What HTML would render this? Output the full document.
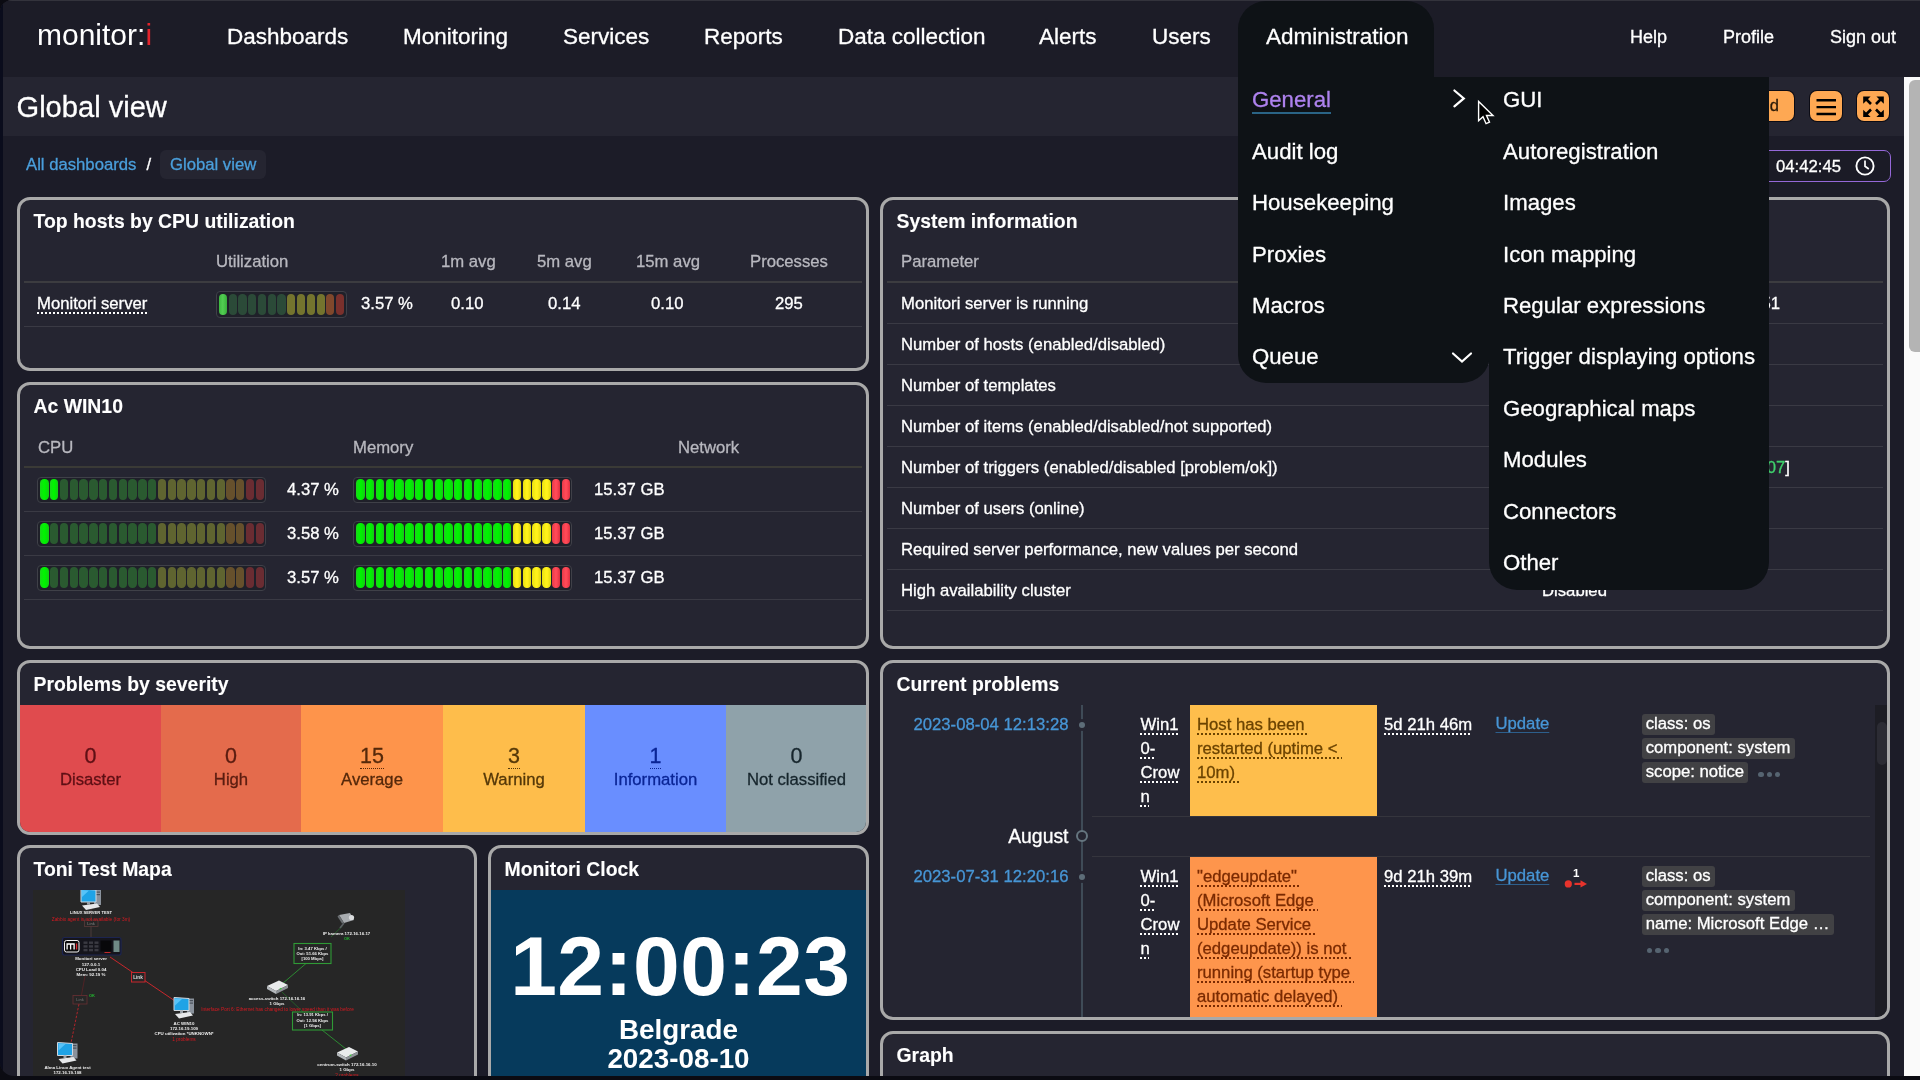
<!DOCTYPE html>
<html>
<head>
<meta charset="utf-8">
<title>Global view</title>
<style>
*{box-sizing:border-box;margin:0;padding:0}
html,body{width:1920px;height:1080px;overflow:hidden;background:#0b0b12}
body{-webkit-text-stroke:.3px;font-family:"Liberation Sans",sans-serif;color:#fff;position:relative}
#screen{will-change:transform;position:absolute;left:0;top:0;width:1920px;height:1075.5px;background:#1c1c28;overflow:hidden;border-radius:12px 0 0 14px}
#edgeL{position:absolute;left:0;top:0;width:2.5px;height:1076px;background:#0a0c1c;z-index:50}
#edgeT{position:absolute;left:0;top:0;width:1920px;height:1.3px;background:#33333c;z-index:50}
.abs{position:absolute}
/* NAV */
#nav{position:absolute;left:0;top:0;width:1920px;height:77px;background:#1c1c27}
#logo{-webkit-text-stroke:0;position:absolute;left:37px;top:17px;font-size:30px;line-height:36px;color:#fff;letter-spacing:0px}
#logo b{font-weight:normal;color:#e2242c}
.nv{position:absolute;top:22.5px;font-size:22.5px;line-height:28px;color:#fff;white-space:nowrap}
.nv2{position:absolute;top:25px;font-size:18px;line-height:24px;color:#fff;white-space:nowrap}
#admtab{position:absolute;left:1238px;top:1px;width:196px;height:81px;background:#0e1216;border-radius:28px 28px 0 0}
/* HEADER */
#hdr{position:absolute;left:0;top:77px;width:1904px;height:59px;background:#252531}
#title{position:absolute;left:16.5px;top:89.5px;font-size:29.1px;line-height:34px;color:#fff}
/* breadcrumbs */
.bc{position:absolute;top:155px;font-size:16.7px;line-height:20px;white-space:nowrap}
/* widgets */
.w{position:absolute;border:3px solid #a9a9a9;border-radius:13px;background:#252531;overflow:hidden}
.wt{-webkit-text-stroke:.1px;position:absolute;left:13.5px;top:8.7px;font-size:19.4px;line-height:24px;font-weight:bold;color:#fff;white-space:nowrap}
.t{position:absolute;white-space:nowrap;font-size:16.7px;line-height:20px;color:#fff}
.th{position:absolute;white-space:nowrap;font-size:16.7px;line-height:20px;color:#b8b8bf}
.hl{position:absolute;height:1px;background:#3a3a44}
.hl2{position:absolute;height:2px;background:#3c3c40}
.barbox{position:absolute;border:1.5px solid #3f4048;border-radius:4px;background:#1f2029}
.sg{position:absolute;display:block;border-radius:4.2px}
.dot{text-decoration:underline dotted;text-underline-offset:3px;text-decoration-thickness:1.5px}
.sev{position:absolute;top:42px;height:130px;text-align:center}
.sn{position:absolute;left:0;right:0;top:38.6px;font-size:21.5px;line-height:24px}
.sn .du{display:inline-block;height:25.7px;border-bottom:1.6px dotted currentColor}
.sl{position:absolute;left:0;right:0;top:64.5px;font-size:16.7px;line-height:20px}
.tag{position:absolute;height:20.5px;padding:0 4.2px;background:#414144;border-radius:3px;font-size:16.7px;line-height:20px;color:#fff;white-space:nowrap}
.hbtn{position:absolute;top:90.7px;height:30.3px;background:#fea853;border-radius:7px;box-shadow:0 0 0 1px #0b0b14}
/* menus */
#dd1{position:absolute;left:1238px;top:77px;width:252px;height:306px;background:#0e1216;border-radius:0 0 28px 28px;z-index:20}
#dd2{position:absolute;left:1489px;top:77px;width:280px;height:513px;background:#0e1216;border-radius:0 0 28px 28px;z-index:21}
.mi{position:absolute;font-size:22.2px;line-height:28px;color:#fff;white-space:nowrap}
/* scrollbar */
#sb{position:absolute;left:1904px;top:77px;width:16px;height:999px;background:#fafafa;z-index:30}
#sbt{position:absolute;left:1909px;top:80px;width:11px;height:272px;background:#b4b4b4;border-radius:6px 0 0 6px;z-index:31}
</style>
</head>
<body>
<div id="screen">
<!-- NAV -->
<div id="nav">
  <div id="admtab"></div>
  <div id="logo">monitor:<b>i</b></div>
  <div class="nv" style="left:227px">Dashboards</div>
  <div class="nv" style="left:403px">Monitoring</div>
  <div class="nv" style="left:563px">Services</div>
  <div class="nv" style="left:704px">Reports</div>
  <div class="nv" style="left:838px">Data collection</div>
  <div class="nv" style="left:1039px">Alerts</div>
  <div class="nv" style="left:1152px">Users</div>
  <div class="nv" style="left:1266px">Administration</div>
  <div class="nv2" style="left:1630px">Help</div>
  <div class="nv2" style="left:1723px">Profile</div>
  <div class="nv2" style="left:1830px">Sign out</div>
</div>
<!-- HEADER -->
<div id="hdr"></div>
<div id="title">Global view</div>
<div class="hbtn" style="left:1700px;width:94px"><span style="position:absolute;right:15px;top:4.5px;font-size:16.5px;line-height:20px;color:#2a1a08">d</span></div>
<div class="hbtn" style="left:1810.2px;width:31.6px"><svg width="33" height="33" viewBox="0 0 33 33" style="position:absolute;left:-0.7px;top:-1px"><path d="M6.5 10.2H26M6.5 17.1H26M6.5 24H26" stroke="#000" stroke-width="2.4" fill="none"/></svg></div>
<div class="hbtn" style="left:1857.3px;width:31.7px"><svg width="33" height="33" viewBox="0 0 33 33" style="position:absolute;left:-0.8px;top:-1px"><g stroke="#000" stroke-width="2.6" fill="none"><path d="M8.5 8.5L14 14M24.5 8.5L19 14M8.5 25L14 19.5M24.5 25L19 19.5"/></g><g fill="#000"><path d="M6.2 6.4H13.6L6.2 13.8Z"/><path d="M26.8 6.4H19.4L26.8 13.8Z"/><path d="M6.2 27.1H13.6L6.2 19.7Z"/><path d="M26.8 27.1H19.4L26.8 19.7Z"/></g></svg></div>

<!-- BREADCRUMBS -->
<div class="abs" style="left:160px;top:150px;width:106px;height:29px;background:#252531;border-radius:6px"></div>
<div class="bc" style="left:26px;color:#4a9fdc">All dashboards</div>
<div class="bc" style="left:146.5px;color:#fff">/</div>
<div class="bc" style="left:170px;color:#4a9fdc">Global view</div>
<div class="abs" style="left:1500px;top:150px;width:391px;height:32px;border:1.7px solid #9568d8;border-radius:7px;background:#1b1b26"></div>
<div class="t" style="left:1776px;top:156.5px">04:42:45</div>
<svg class="abs" style="left:1853px;top:154px" width="24" height="24" viewBox="0 0 24 24"><circle cx="12" cy="12" r="8.6" stroke="#fff" stroke-width="1.9" fill="none"/><path d="M12 6.6V12.3L15.8 15" stroke="#fff" stroke-width="1.7" fill="none"/></svg>


<!-- W1 Top hosts -->
<div class="w" id="w1" style="left:17px;top:197px;width:852px;height:174px">
  <div class="wt">Top hosts by CPU utilization</div>
<div class="th" style="left:196px;top:52px">Utilization</div><div class="th" style="left:421px;top:52px">1m avg</div><div class="th" style="left:517px;top:52px">5m avg</div><div class="th" style="left:616px;top:52px">15m avg</div><div class="th" style="left:730px;top:52px">Processes</div><div class="hl2" style="left:4px;top:81px;width:838px;height:1.5px"></div><div class="t dot" style="left:17px;top:94px">Monitori server</div><div class="barbox" style="left:196px;top:91px;width:131px;height:27px"></div><i class="sg" style="left:198.80px;top:94px;width:8.2px;height:21px;background:linear-gradient(90deg,#3db840,#52cc52 45%,#4cc74c 60%,#38ae3c)"></i><i class="sg" style="left:208.57px;top:94px;width:8.2px;height:21px;background:#2b4a38"></i><i class="sg" style="left:218.34px;top:94px;width:8.2px;height:21px;background:#2b4a38"></i><i class="sg" style="left:228.11px;top:94px;width:8.2px;height:21px;background:#2b4a38"></i><i class="sg" style="left:237.88px;top:94px;width:8.2px;height:21px;background:#2b4a38"></i><i class="sg" style="left:247.65px;top:94px;width:8.2px;height:21px;background:#2b4a38"></i><i class="sg" style="left:257.42px;top:94px;width:8.2px;height:21px;background:#2b4a38"></i><i class="sg" style="left:267.19px;top:94px;width:8.2px;height:21px;background:#74742e"></i><i class="sg" style="left:276.96px;top:94px;width:8.2px;height:21px;background:#74742e"></i><i class="sg" style="left:286.73px;top:94px;width:8.2px;height:21px;background:#74742e"></i><i class="sg" style="left:296.50px;top:94px;width:8.2px;height:21px;background:#74742e"></i><i class="sg" style="left:306.27px;top:94px;width:8.2px;height:21px;background:#80482c"></i><i class="sg" style="left:316.04px;top:94px;width:8.2px;height:21px;background:#7a302c"></i>
<div class="t" style="left:341px;top:94px">3.57 %</div><div class="t" style="left:431px;top:94px">0.10</div><div class="t" style="left:528px;top:94px">0.14</div><div class="t" style="left:631px;top:94px">0.10</div><div class="t" style="left:755px;top:94px">295</div><div class="hl" style="left:4px;top:126px;width:838px"></div>
</div>
<!-- W2 Ac WIN10 -->
<div class="w" id="w2" style="left:17px;top:382px;width:852px;height:267px">
  <div class="wt">Ac WIN10</div>
<div class="th" style="left:18px;top:53px">CPU</div><div class="th" style="left:333px;top:53px">Memory</div><div class="th" style="left:658px;top:53px">Network</div><div class="hl2" style="left:4px;top:81px;width:838px;height:1.5px;background:#3a3a36"></div><div class="barbox" style="left:17px;top:91.5px;width:229px;height:26.5px"></div><i class="sg" style="left:20.30px;top:94.3px;width:8.4px;height:21px;background:linear-gradient(90deg,#18d818,#00f400 45%,#00f000 60%,#14cc14)"></i><i class="sg" style="left:30.09px;top:94.3px;width:8.4px;height:21px;background:linear-gradient(90deg,#18d818,#00f400 45%,#00f000 60%,#14cc14)"></i><i class="sg" style="left:39.88px;top:94.3px;width:8.4px;height:21px;background:#2a5a30"></i><i class="sg" style="left:49.67px;top:94.3px;width:8.4px;height:21px;background:#2a5a30"></i><i class="sg" style="left:59.46px;top:94.3px;width:8.4px;height:21px;background:#2a5a30"></i><i class="sg" style="left:69.25px;top:94.3px;width:8.4px;height:21px;background:#2a5a30"></i><i class="sg" style="left:79.04px;top:94.3px;width:8.4px;height:21px;background:#2a5a30"></i><i class="sg" style="left:88.83px;top:94.3px;width:8.4px;height:21px;background:#2a5a30"></i><i class="sg" style="left:98.62px;top:94.3px;width:8.4px;height:21px;background:#2a5a30"></i><i class="sg" style="left:108.41px;top:94.3px;width:8.4px;height:21px;background:#2a5a30"></i><i class="sg" style="left:118.20px;top:94.3px;width:8.4px;height:21px;background:#2a5a30"></i><i class="sg" style="left:127.99px;top:94.3px;width:8.4px;height:21px;background:#2a5a30"></i><i class="sg" style="left:137.78px;top:94.3px;width:8.4px;height:21px;background:#5f6430"></i><i class="sg" style="left:147.57px;top:94.3px;width:8.4px;height:21px;background:#5f6430"></i><i class="sg" style="left:157.36px;top:94.3px;width:8.4px;height:21px;background:#5f6430"></i><i class="sg" style="left:167.15px;top:94.3px;width:8.4px;height:21px;background:#5f6430"></i><i class="sg" style="left:176.94px;top:94.3px;width:8.4px;height:21px;background:#5f6430"></i><i class="sg" style="left:186.73px;top:94.3px;width:8.4px;height:21px;background:#5f6430"></i><i class="sg" style="left:196.52px;top:94.3px;width:8.4px;height:21px;background:#5f6430"></i><i class="sg" style="left:206.31px;top:94.3px;width:8.4px;height:21px;background:#66502c"></i><i class="sg" style="left:216.10px;top:94.3px;width:8.4px;height:21px;background:#66502c"></i><i class="sg" style="left:225.89px;top:94.3px;width:8.4px;height:21px;background:#6a2c32"></i><i class="sg" style="left:235.68px;top:94.3px;width:8.4px;height:21px;background:#6a2c32"></i>
<div class="t" style="left:267px;top:95px">4.37 %</div><div class="barbox" style="left:333px;top:91.5px;width:219px;height:26.5px"></div><i class="sg" style="left:336.20px;top:94.3px;width:8.4px;height:21px;background:linear-gradient(90deg,#18d818,#00f400 45%,#00f000 60%,#14cc14)"></i><i class="sg" style="left:345.99px;top:94.3px;width:8.4px;height:21px;background:linear-gradient(90deg,#18d818,#00f400 45%,#00f000 60%,#14cc14)"></i><i class="sg" style="left:355.78px;top:94.3px;width:8.4px;height:21px;background:linear-gradient(90deg,#18d818,#00f400 45%,#00f000 60%,#14cc14)"></i><i class="sg" style="left:365.57px;top:94.3px;width:8.4px;height:21px;background:linear-gradient(90deg,#18d818,#00f400 45%,#00f000 60%,#14cc14)"></i><i class="sg" style="left:375.36px;top:94.3px;width:8.4px;height:21px;background:linear-gradient(90deg,#18d818,#00f400 45%,#00f000 60%,#14cc14)"></i><i class="sg" style="left:385.15px;top:94.3px;width:8.4px;height:21px;background:linear-gradient(90deg,#18d818,#00f400 45%,#00f000 60%,#14cc14)"></i><i class="sg" style="left:394.94px;top:94.3px;width:8.4px;height:21px;background:linear-gradient(90deg,#18d818,#00f400 45%,#00f000 60%,#14cc14)"></i><i class="sg" style="left:404.73px;top:94.3px;width:8.4px;height:21px;background:linear-gradient(90deg,#18d818,#00f400 45%,#00f000 60%,#14cc14)"></i><i class="sg" style="left:414.52px;top:94.3px;width:8.4px;height:21px;background:linear-gradient(90deg,#18d818,#00f400 45%,#00f000 60%,#14cc14)"></i><i class="sg" style="left:424.31px;top:94.3px;width:8.4px;height:21px;background:linear-gradient(90deg,#18d818,#00f400 45%,#00f000 60%,#14cc14)"></i><i class="sg" style="left:434.10px;top:94.3px;width:8.4px;height:21px;background:linear-gradient(90deg,#18d818,#00f400 45%,#00f000 60%,#14cc14)"></i><i class="sg" style="left:443.89px;top:94.3px;width:8.4px;height:21px;background:linear-gradient(90deg,#18d818,#00f400 45%,#00f000 60%,#14cc14)"></i><i class="sg" style="left:453.68px;top:94.3px;width:8.4px;height:21px;background:linear-gradient(90deg,#18d818,#00f400 45%,#00f000 60%,#14cc14)"></i><i class="sg" style="left:463.47px;top:94.3px;width:8.4px;height:21px;background:linear-gradient(90deg,#18d818,#00f400 45%,#00f000 60%,#14cc14)"></i><i class="sg" style="left:473.26px;top:94.3px;width:8.4px;height:21px;background:linear-gradient(90deg,#18d818,#00f400 45%,#00f000 60%,#14cc14)"></i><i class="sg" style="left:483.05px;top:94.3px;width:8.4px;height:21px;background:linear-gradient(90deg,#18d818,#00f400 45%,#00f000 60%,#14cc14)"></i><i class="sg" style="left:492.84px;top:94.3px;width:8.4px;height:21px;background:linear-gradient(90deg,#e8e010,#fff31a 45%,#fff01a 60%,#e0d810)"></i><i class="sg" style="left:502.63px;top:94.3px;width:8.4px;height:21px;background:linear-gradient(90deg,#e8e010,#fff31a 45%,#fff01a 60%,#e0d810)"></i><i class="sg" style="left:512.42px;top:94.3px;width:8.4px;height:21px;background:linear-gradient(90deg,#e8e010,#fff31a 45%,#fff01a 60%,#e0d810)"></i><i class="sg" style="left:522.21px;top:94.3px;width:8.4px;height:21px;background:linear-gradient(90deg,#e8e010,#fff31a 45%,#fff01a 60%,#e0d810)"></i><i class="sg" style="left:532.00px;top:94.3px;width:8.4px;height:21px;background:linear-gradient(90deg,#ea3a48,#ff4a58 45%,#ff4755 60%,#e03040)"></i><i class="sg" style="left:541.79px;top:94.3px;width:8.4px;height:21px;background:linear-gradient(90deg,#ea3a48,#ff4a58 45%,#ff4755 60%,#e03040)"></i>
<div class="t" style="left:574px;top:95px">15.37 GB</div><div class="hl" style="left:4px;top:126px;width:838px"></div><div class="barbox" style="left:17px;top:135.5px;width:229px;height:26.5px"></div><i class="sg" style="left:20.30px;top:138.3px;width:8.4px;height:21px;background:linear-gradient(90deg,#18d818,#00f400 45%,#00f000 60%,#14cc14)"></i><i class="sg" style="left:30.09px;top:138.3px;width:8.4px;height:21px;background:#2a5a30"></i><i class="sg" style="left:39.88px;top:138.3px;width:8.4px;height:21px;background:#2a5a30"></i><i class="sg" style="left:49.67px;top:138.3px;width:8.4px;height:21px;background:#2a5a30"></i><i class="sg" style="left:59.46px;top:138.3px;width:8.4px;height:21px;background:#2a5a30"></i><i class="sg" style="left:69.25px;top:138.3px;width:8.4px;height:21px;background:#2a5a30"></i><i class="sg" style="left:79.04px;top:138.3px;width:8.4px;height:21px;background:#2a5a30"></i><i class="sg" style="left:88.83px;top:138.3px;width:8.4px;height:21px;background:#2a5a30"></i><i class="sg" style="left:98.62px;top:138.3px;width:8.4px;height:21px;background:#2a5a30"></i><i class="sg" style="left:108.41px;top:138.3px;width:8.4px;height:21px;background:#2a5a30"></i><i class="sg" style="left:118.20px;top:138.3px;width:8.4px;height:21px;background:#2a5a30"></i><i class="sg" style="left:127.99px;top:138.3px;width:8.4px;height:21px;background:#2a5a30"></i><i class="sg" style="left:137.78px;top:138.3px;width:8.4px;height:21px;background:#5f6430"></i><i class="sg" style="left:147.57px;top:138.3px;width:8.4px;height:21px;background:#5f6430"></i><i class="sg" style="left:157.36px;top:138.3px;width:8.4px;height:21px;background:#5f6430"></i><i class="sg" style="left:167.15px;top:138.3px;width:8.4px;height:21px;background:#5f6430"></i><i class="sg" style="left:176.94px;top:138.3px;width:8.4px;height:21px;background:#5f6430"></i><i class="sg" style="left:186.73px;top:138.3px;width:8.4px;height:21px;background:#5f6430"></i><i class="sg" style="left:196.52px;top:138.3px;width:8.4px;height:21px;background:#5f6430"></i><i class="sg" style="left:206.31px;top:138.3px;width:8.4px;height:21px;background:#66502c"></i><i class="sg" style="left:216.10px;top:138.3px;width:8.4px;height:21px;background:#66502c"></i><i class="sg" style="left:225.89px;top:138.3px;width:8.4px;height:21px;background:#6a2c32"></i><i class="sg" style="left:235.68px;top:138.3px;width:8.4px;height:21px;background:#6a2c32"></i>
<div class="t" style="left:267px;top:139px">3.58 %</div><div class="barbox" style="left:333px;top:135.5px;width:219px;height:26.5px"></div><i class="sg" style="left:336.20px;top:138.3px;width:8.4px;height:21px;background:linear-gradient(90deg,#18d818,#00f400 45%,#00f000 60%,#14cc14)"></i><i class="sg" style="left:345.99px;top:138.3px;width:8.4px;height:21px;background:linear-gradient(90deg,#18d818,#00f400 45%,#00f000 60%,#14cc14)"></i><i class="sg" style="left:355.78px;top:138.3px;width:8.4px;height:21px;background:linear-gradient(90deg,#18d818,#00f400 45%,#00f000 60%,#14cc14)"></i><i class="sg" style="left:365.57px;top:138.3px;width:8.4px;height:21px;background:linear-gradient(90deg,#18d818,#00f400 45%,#00f000 60%,#14cc14)"></i><i class="sg" style="left:375.36px;top:138.3px;width:8.4px;height:21px;background:linear-gradient(90deg,#18d818,#00f400 45%,#00f000 60%,#14cc14)"></i><i class="sg" style="left:385.15px;top:138.3px;width:8.4px;height:21px;background:linear-gradient(90deg,#18d818,#00f400 45%,#00f000 60%,#14cc14)"></i><i class="sg" style="left:394.94px;top:138.3px;width:8.4px;height:21px;background:linear-gradient(90deg,#18d818,#00f400 45%,#00f000 60%,#14cc14)"></i><i class="sg" style="left:404.73px;top:138.3px;width:8.4px;height:21px;background:linear-gradient(90deg,#18d818,#00f400 45%,#00f000 60%,#14cc14)"></i><i class="sg" style="left:414.52px;top:138.3px;width:8.4px;height:21px;background:linear-gradient(90deg,#18d818,#00f400 45%,#00f000 60%,#14cc14)"></i><i class="sg" style="left:424.31px;top:138.3px;width:8.4px;height:21px;background:linear-gradient(90deg,#18d818,#00f400 45%,#00f000 60%,#14cc14)"></i><i class="sg" style="left:434.10px;top:138.3px;width:8.4px;height:21px;background:linear-gradient(90deg,#18d818,#00f400 45%,#00f000 60%,#14cc14)"></i><i class="sg" style="left:443.89px;top:138.3px;width:8.4px;height:21px;background:linear-gradient(90deg,#18d818,#00f400 45%,#00f000 60%,#14cc14)"></i><i class="sg" style="left:453.68px;top:138.3px;width:8.4px;height:21px;background:linear-gradient(90deg,#18d818,#00f400 45%,#00f000 60%,#14cc14)"></i><i class="sg" style="left:463.47px;top:138.3px;width:8.4px;height:21px;background:linear-gradient(90deg,#18d818,#00f400 45%,#00f000 60%,#14cc14)"></i><i class="sg" style="left:473.26px;top:138.3px;width:8.4px;height:21px;background:linear-gradient(90deg,#18d818,#00f400 45%,#00f000 60%,#14cc14)"></i><i class="sg" style="left:483.05px;top:138.3px;width:8.4px;height:21px;background:linear-gradient(90deg,#18d818,#00f400 45%,#00f000 60%,#14cc14)"></i><i class="sg" style="left:492.84px;top:138.3px;width:8.4px;height:21px;background:linear-gradient(90deg,#e8e010,#fff31a 45%,#fff01a 60%,#e0d810)"></i><i class="sg" style="left:502.63px;top:138.3px;width:8.4px;height:21px;background:linear-gradient(90deg,#e8e010,#fff31a 45%,#fff01a 60%,#e0d810)"></i><i class="sg" style="left:512.42px;top:138.3px;width:8.4px;height:21px;background:linear-gradient(90deg,#e8e010,#fff31a 45%,#fff01a 60%,#e0d810)"></i><i class="sg" style="left:522.21px;top:138.3px;width:8.4px;height:21px;background:linear-gradient(90deg,#e8e010,#fff31a 45%,#fff01a 60%,#e0d810)"></i><i class="sg" style="left:532.00px;top:138.3px;width:8.4px;height:21px;background:linear-gradient(90deg,#ea3a48,#ff4a58 45%,#ff4755 60%,#e03040)"></i><i class="sg" style="left:541.79px;top:138.3px;width:8.4px;height:21px;background:linear-gradient(90deg,#ea3a48,#ff4a58 45%,#ff4755 60%,#e03040)"></i>
<div class="t" style="left:574px;top:139px">15.37 GB</div><div class="hl" style="left:4px;top:170px;width:838px"></div><div class="barbox" style="left:17px;top:179.5px;width:229px;height:26.5px"></div><i class="sg" style="left:20.30px;top:182.3px;width:8.4px;height:21px;background:linear-gradient(90deg,#18d818,#00f400 45%,#00f000 60%,#14cc14)"></i><i class="sg" style="left:30.09px;top:182.3px;width:8.4px;height:21px;background:#2a5a30"></i><i class="sg" style="left:39.88px;top:182.3px;width:8.4px;height:21px;background:#2a5a30"></i><i class="sg" style="left:49.67px;top:182.3px;width:8.4px;height:21px;background:#2a5a30"></i><i class="sg" style="left:59.46px;top:182.3px;width:8.4px;height:21px;background:#2a5a30"></i><i class="sg" style="left:69.25px;top:182.3px;width:8.4px;height:21px;background:#2a5a30"></i><i class="sg" style="left:79.04px;top:182.3px;width:8.4px;height:21px;background:#2a5a30"></i><i class="sg" style="left:88.83px;top:182.3px;width:8.4px;height:21px;background:#2a5a30"></i><i class="sg" style="left:98.62px;top:182.3px;width:8.4px;height:21px;background:#2a5a30"></i><i class="sg" style="left:108.41px;top:182.3px;width:8.4px;height:21px;background:#2a5a30"></i><i class="sg" style="left:118.20px;top:182.3px;width:8.4px;height:21px;background:#2a5a30"></i><i class="sg" style="left:127.99px;top:182.3px;width:8.4px;height:21px;background:#2a5a30"></i><i class="sg" style="left:137.78px;top:182.3px;width:8.4px;height:21px;background:#5f6430"></i><i class="sg" style="left:147.57px;top:182.3px;width:8.4px;height:21px;background:#5f6430"></i><i class="sg" style="left:157.36px;top:182.3px;width:8.4px;height:21px;background:#5f6430"></i><i class="sg" style="left:167.15px;top:182.3px;width:8.4px;height:21px;background:#5f6430"></i><i class="sg" style="left:176.94px;top:182.3px;width:8.4px;height:21px;background:#5f6430"></i><i class="sg" style="left:186.73px;top:182.3px;width:8.4px;height:21px;background:#5f6430"></i><i class="sg" style="left:196.52px;top:182.3px;width:8.4px;height:21px;background:#5f6430"></i><i class="sg" style="left:206.31px;top:182.3px;width:8.4px;height:21px;background:#66502c"></i><i class="sg" style="left:216.10px;top:182.3px;width:8.4px;height:21px;background:#66502c"></i><i class="sg" style="left:225.89px;top:182.3px;width:8.4px;height:21px;background:#6a2c32"></i><i class="sg" style="left:235.68px;top:182.3px;width:8.4px;height:21px;background:#6a2c32"></i>
<div class="t" style="left:267px;top:183px">3.57 %</div><div class="barbox" style="left:333px;top:179.5px;width:219px;height:26.5px"></div><i class="sg" style="left:336.20px;top:182.3px;width:8.4px;height:21px;background:linear-gradient(90deg,#18d818,#00f400 45%,#00f000 60%,#14cc14)"></i><i class="sg" style="left:345.99px;top:182.3px;width:8.4px;height:21px;background:linear-gradient(90deg,#18d818,#00f400 45%,#00f000 60%,#14cc14)"></i><i class="sg" style="left:355.78px;top:182.3px;width:8.4px;height:21px;background:linear-gradient(90deg,#18d818,#00f400 45%,#00f000 60%,#14cc14)"></i><i class="sg" style="left:365.57px;top:182.3px;width:8.4px;height:21px;background:linear-gradient(90deg,#18d818,#00f400 45%,#00f000 60%,#14cc14)"></i><i class="sg" style="left:375.36px;top:182.3px;width:8.4px;height:21px;background:linear-gradient(90deg,#18d818,#00f400 45%,#00f000 60%,#14cc14)"></i><i class="sg" style="left:385.15px;top:182.3px;width:8.4px;height:21px;background:linear-gradient(90deg,#18d818,#00f400 45%,#00f000 60%,#14cc14)"></i><i class="sg" style="left:394.94px;top:182.3px;width:8.4px;height:21px;background:linear-gradient(90deg,#18d818,#00f400 45%,#00f000 60%,#14cc14)"></i><i class="sg" style="left:404.73px;top:182.3px;width:8.4px;height:21px;background:linear-gradient(90deg,#18d818,#00f400 45%,#00f000 60%,#14cc14)"></i><i class="sg" style="left:414.52px;top:182.3px;width:8.4px;height:21px;background:linear-gradient(90deg,#18d818,#00f400 45%,#00f000 60%,#14cc14)"></i><i class="sg" style="left:424.31px;top:182.3px;width:8.4px;height:21px;background:linear-gradient(90deg,#18d818,#00f400 45%,#00f000 60%,#14cc14)"></i><i class="sg" style="left:434.10px;top:182.3px;width:8.4px;height:21px;background:linear-gradient(90deg,#18d818,#00f400 45%,#00f000 60%,#14cc14)"></i><i class="sg" style="left:443.89px;top:182.3px;width:8.4px;height:21px;background:linear-gradient(90deg,#18d818,#00f400 45%,#00f000 60%,#14cc14)"></i><i class="sg" style="left:453.68px;top:182.3px;width:8.4px;height:21px;background:linear-gradient(90deg,#18d818,#00f400 45%,#00f000 60%,#14cc14)"></i><i class="sg" style="left:463.47px;top:182.3px;width:8.4px;height:21px;background:linear-gradient(90deg,#18d818,#00f400 45%,#00f000 60%,#14cc14)"></i><i class="sg" style="left:473.26px;top:182.3px;width:8.4px;height:21px;background:linear-gradient(90deg,#18d818,#00f400 45%,#00f000 60%,#14cc14)"></i><i class="sg" style="left:483.05px;top:182.3px;width:8.4px;height:21px;background:linear-gradient(90deg,#18d818,#00f400 45%,#00f000 60%,#14cc14)"></i><i class="sg" style="left:492.84px;top:182.3px;width:8.4px;height:21px;background:linear-gradient(90deg,#e8e010,#fff31a 45%,#fff01a 60%,#e0d810)"></i><i class="sg" style="left:502.63px;top:182.3px;width:8.4px;height:21px;background:linear-gradient(90deg,#e8e010,#fff31a 45%,#fff01a 60%,#e0d810)"></i><i class="sg" style="left:512.42px;top:182.3px;width:8.4px;height:21px;background:linear-gradient(90deg,#e8e010,#fff31a 45%,#fff01a 60%,#e0d810)"></i><i class="sg" style="left:522.21px;top:182.3px;width:8.4px;height:21px;background:linear-gradient(90deg,#e8e010,#fff31a 45%,#fff01a 60%,#e0d810)"></i><i class="sg" style="left:532.00px;top:182.3px;width:8.4px;height:21px;background:linear-gradient(90deg,#ea3a48,#ff4a58 45%,#ff4755 60%,#e03040)"></i><i class="sg" style="left:541.79px;top:182.3px;width:8.4px;height:21px;background:linear-gradient(90deg,#ea3a48,#ff4a58 45%,#ff4755 60%,#e03040)"></i>
<div class="t" style="left:574px;top:183px">15.37 GB</div><div class="hl" style="left:4px;top:214px;width:838px"></div>
</div>
<!-- W3 Problems by severity -->
<div class="w" id="w3" style="left:17px;top:660px;width:852px;height:175px">
  <div class="wt">Problems by severity</div>
<div class="sev" style="left:0px;width:141px;background:#e04b4e;color:#5e0f14"><div class="sn"><span>0</span></div><div class="sl">Disaster</div></div><div class="sev" style="left:141px;width:140px;background:#e46b4c;color:#5a1c10"><div class="sn"><span>0</span></div><div class="sl">High</div></div><div class="sev" style="left:281px;width:142px;background:#fe944b;color:#55280a"><div class="sn"><span class="du">15</span></div><div class="sl">Average</div></div><div class="sev" style="left:423px;width:142px;background:#febd4b;color:#553808"><div class="sn"><span class="du">3</span></div><div class="sl">Warning</div></div><div class="sev" style="left:565px;width:141px;background:#698eff;color:#0a2596"><div class="sn"><span class="du">1</span></div><div class="sl">Information</div></div><div class="sev" style="left:706px;width:141px;background:#8fa2aa;color:#16252c"><div class="sn"><span>0</span></div><div class="sl">Not classified</div></div>
</div>
<!-- W4 Map -->
<div class="w" id="w4" style="left:17px;top:845px;width:460px;height:260px">
  <div class="wt">Toni Test Mapa</div>
<svg class="abs" style="left:13px;top:42px;filter:blur(.45px)" width="372" height="190" viewBox="0 0 372 190" font-family="Liberation Sans, sans-serif"><rect width="372" height="190" fill="#262626"/><path d="M58 17L58 48" stroke="#4a3a3a" stroke-width="1" fill="none"/><path d="M77 67L142 111" stroke="#c8262c" stroke-width="1" fill="none"/><path d="M52 86L48.5 105" stroke="#5a2226" stroke-width="0.8" fill="none"/><path d="M46 114L38 153" stroke="#b0242a" stroke-width="1" stroke-dasharray="2.5 1.5" fill="none"/><path d="M309.5 36L298 47" stroke="#256a2a" stroke-width="0.8" fill="none"/><path d="M273 73.5L249 94" stroke="#2c8a32" stroke-width="1" fill="none"/><path d="M249 102L270 122" stroke="#256a2a" stroke-width="0.8" fill="none"/><path d="M289 140L313 159" stroke="#2c8a32" stroke-width="1" fill="none"/><rect x="51.5" y="30" width="13.5" height="6.5" fill="#262626" stroke="#5a3a3a" stroke-width="0.8"/><text x="58" y="34.812" text-anchor="middle" font-size="4.2" fill="#9a9a9a" opacity="0.8">Link</text><rect x="98.5" y="82.5" width="13.5" height="9.5" fill="#262626" stroke="#c8262c" stroke-width="1"/><text x="105" y="88.956" text-anchor="middle" font-size="4.6" fill="#e8e8e8" opacity="0.95" font-weight="bold">Link</text><rect x="40" y="105.5" width="14" height="8.5" fill="#262626" stroke="#6a3034" stroke-width="0.8"/><text x="47" y="111.312" text-anchor="middle" font-size="4.2" fill="#8a8a8a" opacity="0.8">Link</text><text x="59" y="107.44" text-anchor="middle" font-size="4" fill="#22c030" opacity="0.9" font-weight="bold">OK</text><rect x="29.5" y="47.5" width="58.5" height="17.5" rx="2" fill="#15151c" stroke="#1c2450" stroke-width="1.2"/><rect x="31.5" y="50.5" width="14.5" height="11.5" rx="2" fill="#0c0c0c" stroke="#f2f2f2" stroke-width="1"/><path d="M34.1 59.5v-5.5h3.5v5.5m0-5.5h3.5v5.5" stroke="#fff" stroke-width="1.3" fill="none"/><rect x="42.9" y="53.5" width="1.3" height="6" fill="#e2242c"/><rect x="50.5" y="51.5" width="4" height="2.4" fill="#3a3a42"/><rect x="50.5" y="55.2" width="4" height="2.4" fill="#3a3a42"/><rect x="50.5" y="58.9" width="4" height="2.4" fill="#3a3a42"/><rect x="56" y="51.5" width="4" height="2.4" fill="#3a3a42"/><rect x="56" y="55.2" width="4" height="2.4" fill="#3a3a42"/><rect x="56" y="58.9" width="4" height="2.4" fill="#3a3a42"/><rect x="61.5" y="51.5" width="4" height="2.4" fill="#3a3a42"/><rect x="61.5" y="55.2" width="4" height="2.4" fill="#3a3a42"/><rect x="61.5" y="58.9" width="4" height="2.4" fill="#3a3a42"/><rect x="67.5" y="50.5" width="11" height="11" fill="#08080a"/><rect x="80.5" y="50.5" width="6" height="11.5" fill="#6f8a86"/><rect x="71.5" y="62" width="6" height="1" fill="#c02a2a"/><text x="58" y="70.484" text-anchor="middle" font-size="4.4" fill="#fff" opacity="0.92" font-weight="bold">Monitori server</text><text x="58" y="75.784" text-anchor="middle" font-size="4.4" fill="#fff" opacity="0.92" font-weight="bold">127.0.0.1</text><text x="58" y="81.084" text-anchor="middle" font-size="4.4" fill="#fff" opacity="0.92" font-weight="bold">CPU Load 0.04</text><text x="58" y="86.384" text-anchor="middle" font-size="4.4" fill="#fff" opacity="0.92" font-weight="bold">Mem: 92.19 %</text><g transform="translate(58,9)"><rect x="3" y="-9" width="7" height="15" fill="#8a929c"/><rect x="4" y="-7.5" width="5" height="1.2" fill="#4a525c"/><rect x="4" y="-5" width="5" height="1.2" fill="#4a525c"/><path d="M-10 -10 L5 -9 L5 3 L-10 3 Z" fill="#1fa3e6"/><path d="M-10 -10 L5 -9 L5 3 L-10 3 Z" fill="none" stroke="#cfd8e0" stroke-width="1"/><path d="M-9 -9 L-2 -8.6 L-9 -2 Z" fill="#6fd0ff" opacity=".7"/><rect x="-4" y="3" width="3" height="2.5" fill="#9aa2aa"/><path d="M-9 6.5 L6 4.5 L9 8 L-5 11 Z" fill="#e6e8ea"/></g><text x="58" y="24.476" text-anchor="middle" font-size="4.1" fill="#fff" opacity="0.92" font-weight="bold">LINUX SERVER TEST</text><text x="58" y="30.5172" text-anchor="middle" font-size="4.77" fill="#e01820" opacity="0.95">Zabbix agent is not available (for 3m)</text><g transform="translate(151,117.5)"><rect x="3" y="-9" width="7" height="15" fill="#8a929c"/><rect x="4" y="-7.5" width="5" height="1.2" fill="#4a525c"/><rect x="4" y="-5" width="5" height="1.2" fill="#4a525c"/><path d="M-10 -10 L5 -9 L5 3 L-10 3 Z" fill="#1fa3e6"/><path d="M-10 -10 L5 -9 L5 3 L-10 3 Z" fill="none" stroke="#cfd8e0" stroke-width="1"/><path d="M-9 -9 L-2 -8.6 L-9 -2 Z" fill="#6fd0ff" opacity=".7"/><rect x="-4" y="3" width="3" height="2.5" fill="#9aa2aa"/><path d="M-9 6.5 L6 4.5 L9 8 L-5 11 Z" fill="#e6e8ea"/></g><text x="151" y="134.584" text-anchor="middle" font-size="4.4" fill="#fff" opacity="0.92" font-weight="bold">AC WIN10</text><text x="151" y="139.884" text-anchor="middle" font-size="4.4" fill="#fff" opacity="0.92" font-weight="bold">172.16.19.109</text><text x="151" y="145.184" text-anchor="middle" font-size="4.4" fill="#fff" opacity="0.92" font-weight="bold">CPU utilization *UNKNOWN*</text><text x="151" y="151.01" text-anchor="middle" font-size="4.75" fill="#e01820" opacity="0.95">1 problems</text><text x="244.5" y="120.51" text-anchor="middle" font-size="4.75" fill="#e01820" opacity="0.95">Interface Port 6: Ethernet has changed to lower speed than it was before</text><g transform="translate(34.5,162.5)"><rect x="3" y="-9" width="7" height="15" fill="#8a929c"/><rect x="4" y="-7.5" width="5" height="1.2" fill="#4a525c"/><rect x="4" y="-5" width="5" height="1.2" fill="#4a525c"/><path d="M-10 -10 L5 -9 L5 3 L-10 3 Z" fill="#1fa3e6"/><path d="M-10 -10 L5 -9 L5 3 L-10 3 Z" fill="none" stroke="#cfd8e0" stroke-width="1"/><path d="M-9 -9 L-2 -8.6 L-9 -2 Z" fill="#6fd0ff" opacity=".7"/><rect x="-4" y="3" width="3" height="2.5" fill="#9aa2aa"/><path d="M-9 6.5 L6 4.5 L9 8 L-5 11 Z" fill="#e6e8ea"/></g><text x="34.5" y="178.884" text-anchor="middle" font-size="4.4" fill="#fff" opacity="0.92" font-weight="bold">Alma Linux Agent test</text><text x="34.5" y="184.384" text-anchor="middle" font-size="4.4" fill="#fff" opacity="0.92" font-weight="bold">172.16.19.108</text><g transform="translate(313,29)"><path d="M-7 -4 L4 -6 L8 1 L-2 4 Z" fill="#a8acb0"/><path d="M-7 -4 L-2 4 L-4 4.5 L-8.5 -2.5 Z" fill="#6a6e72"/><circle cx="5.5" cy="-1.5" r="2.6" fill="#dadcde"/><path d="M-2 4 L-6 9" stroke="#5a5e62" stroke-width="1.6"/></g><text x="313.5" y="44.584" text-anchor="middle" font-size="4.4" fill="#fff" opacity="0.92" font-weight="bold">IP kamera 172.16.16.17</text><text x="314" y="49.74" text-anchor="middle" font-size="4" fill="#22c030" opacity="0.9" font-weight="bold">OK</text><rect x="261" y="53.5" width="37" height="20" fill="#262626" stroke="#2f9a36" stroke-width="1.1"/><text x="279.5" y="59.812" text-anchor="middle" font-size="4.2" fill="#fff" opacity="0.92" font-weight="bold">In: 3.47 Kbps /</text><text x="279.5" y="65.112" text-anchor="middle" font-size="4.2" fill="#fff" opacity="0.92" font-weight="bold">Out: 51.66 Kbps</text><text x="279.5" y="70.412" text-anchor="middle" font-size="4.2" fill="#fff" opacity="0.92" font-weight="bold">[100 Mbps]</text><rect x="259.5" y="122" width="40" height="18" fill="#262626" stroke="#2f9a36" stroke-width="1.1"/><text x="279.5" y="126.312" text-anchor="middle" font-size="4.2" fill="#fff" opacity="0.92" font-weight="bold">In: 13.91 Kbps /</text><text x="279.5" y="131.612" text-anchor="middle" font-size="4.2" fill="#fff" opacity="0.92" font-weight="bold">Out: 12.94 Kbps</text><text x="279.5" y="136.912" text-anchor="middle" font-size="4.2" fill="#fff" opacity="0.92" font-weight="bold">[1 Gbps]</text><g transform="translate(244,96)"><path d="M-10 0 L2 -5.5 L11 -1 L-1 5 Z" fill="#e9ebec"/><path d="M-10 0 L-1 5 L-1 8 L-10 3 Z" fill="#b4b8bc"/><path d="M-1 5 L11 -1 L11 2 L-1 8 Z" fill="#8c9196"/><rect x="1" y="3.4" width="2" height="1.2" fill="#38c838" transform="rotate(-27)"/></g><text x="244" y="109.584" text-anchor="middle" font-size="4.4" fill="#fff" opacity="0.92" font-weight="bold">access-switch 172.16.16.16</text><text x="244" y="114.884" text-anchor="middle" font-size="4.4" fill="#fff" opacity="0.92" font-weight="bold">1 Gbps</text><g transform="translate(314,162.5)"><path d="M-10 0 L2 -5.5 L11 -1 L-1 5 Z" fill="#e9ebec"/><path d="M-10 0 L-1 5 L-1 8 L-10 3 Z" fill="#b4b8bc"/><path d="M-1 5 L11 -1 L11 2 L-1 8 Z" fill="#8c9196"/><rect x="1" y="3.4" width="2" height="1.2" fill="#38c838" transform="rotate(-27)"/></g><text x="314" y="175.784" text-anchor="middle" font-size="4.4" fill="#fff" opacity="0.92" font-weight="bold">centrum-switch 172.16.16.10</text><text x="314" y="181.184" text-anchor="middle" font-size="4.4" fill="#fff" opacity="0.92" font-weight="bold">1 Gbps</text><text x="314" y="186.71" text-anchor="middle" font-size="4.75" fill="#e01820" opacity="0.95">2 problems</text></svg>
</div>
<!-- W5 Clock -->
<div class="w" id="w5" style="left:488px;top:845px;width:381px;height:260px">
  <div class="wt">Monitori Clock</div>
<div class="abs" style="left:0;top:42px;width:375px;height:200px;background:#063a5c"></div><div class="abs" style="left:1.5px;width:375px;top:73px;text-align:center;-webkit-text-stroke:0;font-weight:bold;font-size:84px;line-height:90px;color:#fff;white-space:nowrap;letter-spacing:.5px;text-indent:.5px">12:00:23</div><div class="abs" style="left:0;width:375px;top:167px;text-align:center;-webkit-text-stroke:0;font-weight:bold;font-size:27.8px;line-height:30px;color:#fff">Belgrade</div><div class="abs" style="left:0;width:375px;top:196px;text-align:center;-webkit-text-stroke:0;font-weight:bold;font-size:27.8px;line-height:30px;color:#fff">2023-08-10</div>
</div>
<!-- W6 System info -->
<div class="w" id="w6" style="left:880px;top:197px;width:1010px;height:452px">
  <div class="wt">System information</div>
<div class="th" style="left:18px;top:52px">Parameter</div><div class="th" style="left:659px;top:52px">Value</div><div class="th" style="left:817px;top:52px">Details</div><div class="hl2" style="left:4px;top:81px;width:996px"></div><div class="t" style="left:18px;top:94px">Monitori server is running</div><div class="hl" style="left:4px;top:123px;width:996px"></div><div class="t" style="left:18px;top:135px">Number of hosts (enabled/disabled)</div><div class="hl" style="left:4px;top:164px;width:996px"></div><div class="t" style="left:18px;top:176px">Number of templates</div><div class="hl" style="left:4px;top:205px;width:996px"></div><div class="t" style="left:18px;top:217px">Number of items (enabled/disabled/not supported)</div><div class="hl" style="left:4px;top:246px;width:996px"></div><div class="t" style="left:18px;top:258px">Number of triggers (enabled/disabled [problem/ok])</div><div class="hl" style="left:4px;top:287px;width:996px"></div><div class="t" style="left:18px;top:299px">Number of users (online)</div><div class="hl" style="left:4px;top:328px;width:996px"></div><div class="t" style="left:18px;top:340px">Required server performance, new values per second</div><div class="hl" style="left:4px;top:369px;width:996px"></div><div class="t" style="left:18px;top:381px">High availability cluster</div><div class="hl" style="left:4px;top:410px;width:996px"></div><div class="t" style="right:107px;top:94px">localhost:10051</div><div class="t" style="right:97px;top:258px">152 / 0 [<span style="color:#e45959">19</span> / <span style="color:#3fd06c">107</span>]</div><div class="t" style="left:659px;top:381px">Disabled</div>
</div>
<!-- W7 Current problems -->
<div class="w" id="w7" style="left:880px;top:660px;width:1010px;height:360px">
  <div class="wt">Current problems</div>
<div class="abs" style="left:197.9px;top:42px;width:2.6px;height:320px;background:#3f4b57"></div><div class="abs" style="left:193.2px;top:55.5px;width:12px;height:12px;border-radius:6px;background:#252531"></div><div class="abs" style="left:196.2px;top:58.5px;width:6px;height:6px;border-radius:3px;background:#5d6d78"></div><div class="abs" style="left:193.2px;top:207.5px;width:12px;height:12px;border-radius:6px;background:#252531"></div><div class="abs" style="left:196.2px;top:210.5px;width:6px;height:6px;border-radius:3px;background:#5d6d78"></div><div class="abs" style="left:193.2px;top:167px;width:12px;height:12px;border-radius:6px;background:#252531;border:2.2px solid #65757f"></div><div class="t" style="right:818.5px;top:161px;font-size:19.4px;line-height:24px">August</div><div class="abs" style="left:992px;top:42px;width:12px;height:320px;background:#1d1d24"></div><div class="abs" style="left:994px;top:59px;width:10px;height:43px;background:#2c2c34;border-radius:5px"></div><div class="hl" style="left:209px;top:153px;width:778px;background:#35353d"></div><div class="hl" style="left:209px;top:193px;width:778px;background:#35353d"></div><div class="t" style="left:30.5px;top:52px;color:#4796d6">2023-08-04 12:13:28</div><div class="t dot" style="left:257.5px;top:52px">Win1</div><div class="t dot" style="left:257.5px;top:76px">0-</div><div class="t dot" style="left:257.5px;top:100px">Crow</div><div class="t dot" style="left:257.5px;top:124px">n</div><div class="abs" style="left:307px;top:42px;width:187px;height:111px;background:#febe4c"></div><div class="t dot" style="left:314px;top:52px;color:#6b4300">Host has been&nbsp;</div><div class="t dot" style="left:314px;top:76px;color:#6b4300">restarted (uptime &lt;&nbsp;</div><div class="t dot" style="left:314px;top:100px;color:#6b4300">10m)&nbsp;</div><div class="t dot" style="left:501px;top:52px">5d 21h 46m</div><div class="t" style="left:612.5px;top:51.2px;color:#4796d6;text-decoration:underline;text-decoration-color:#2d5f8c;text-decoration-thickness:1.2px;text-underline-offset:3px">Update</div><div class="tag" style="left:758.5px;top:51px">class: os</div><div class="tag" style="left:758.5px;top:75px">component: system</div><div class="tag" style="left:758.5px;top:99px">scope: notice</div><div class="abs" style="left:875.3px;top:109.1px;width:5.4px;height:5.4px;border-radius:3px;background:#566471"></div><div class="abs" style="left:883.6px;top:109.1px;width:5.4px;height:5.4px;border-radius:3px;background:#566471"></div><div class="abs" style="left:891.9px;top:109.1px;width:5.4px;height:5.4px;border-radius:3px;background:#566471"></div><div class="t" style="left:30.5px;top:204px;color:#4796d6">2023-07-31 12:20:16</div><div class="t dot" style="left:257.5px;top:204px">Win1</div><div class="t dot" style="left:257.5px;top:228px">0-</div><div class="t dot" style="left:257.5px;top:252px">Crow</div><div class="t dot" style="left:257.5px;top:276px">n</div><div class="abs" style="left:307px;top:194px;width:187px;height:165px;background:#fe954c"></div><div class="t dot" style="left:314px;top:204px;color:#7a2a02">"edgeupdate"&nbsp;</div><div class="t dot" style="left:314px;top:228px;color:#7a2a02">(Microsoft Edge&nbsp;</div><div class="t dot" style="left:314px;top:252px;color:#7a2a02">Update Service&nbsp;</div><div class="t dot" style="left:314px;top:276px;color:#7a2a02">(edgeupdate)) is not&nbsp;</div><div class="t dot" style="left:314px;top:300px;color:#7a2a02">running (startup type&nbsp;</div><div class="t dot" style="left:314px;top:324px;color:#7a2a02">automatic delayed)&nbsp;</div><div class="t dot" style="left:501px;top:204px">9d 21h 39m</div><div class="t" style="left:612.5px;top:203.2px;color:#4796d6;text-decoration:underline;text-decoration-color:#2d5f8c;text-decoration-thickness:1.2px;text-underline-offset:3px">Update</div><div class="tag" style="left:758.5px;top:203px">class: os</div><div class="tag" style="left:758.5px;top:227px">component: system</div><div class="tag" style="left:758.5px;top:251px">name: Microsoft Edge …</div><div class="abs" style="left:764.1px;top:284.6px;width:5.4px;height:5.4px;border-radius:3px;background:#566471"></div><div class="abs" style="left:772.4px;top:284.6px;width:5.4px;height:5.4px;border-radius:3px;background:#566471"></div><div class="abs" style="left:780.7px;top:284.6px;width:5.4px;height:5.4px;border-radius:3px;background:#566471"></div><svg class="abs" style="left:677px;top:202px" width="30" height="24" viewBox="0 0 30 24"><circle cx="8.3" cy="18.9" r="3.6" fill="#e8332c"/><path d="M14.5 18.9 H22" stroke="#e8332c" stroke-width="2.2" fill="none"/><path d="M20.5 15.2 L27 18.9 L20.5 22.6 Z" fill="#e8332c"/><text x="13" y="12.2" font-family="Liberation Sans" font-weight="bold" font-size="11.5" fill="#fff">1</text></svg>
</div>
<!-- W8 Graph -->
<div class="w" id="w8" style="left:880px;top:1031px;width:1010px;height:100px">
  <div class="wt">Graph</div>
</div>

<!-- MENUS -->
<div id="dd1">
<div class="mi" style="left:14px;top:9.3px;color:#ae82ee">General</div>
<div class="abs" style="left:14px;top:35px;width:79px;height:2px;background:#2a6486"></div>
<svg class="abs" style="left:210px;top:8px" width="24" height="28" viewBox="0 0 24 28"><path d="M6.4 5.5L15.8 13.4L6.4 21.4" stroke="#fff" stroke-width="2.2" fill="none" stroke-linecap="round" stroke-linejoin="miter"/></svg>
<div class="mi" style="left:14px;top:60.7px">Audit log</div>
<div class="mi" style="left:14px;top:112.1px">Housekeeping</div>
<div class="mi" style="left:14px;top:163.5px">Proxies</div>
<div class="mi" style="left:14px;top:214.9px">Macros</div>
<div class="mi" style="left:14px;top:266.3px">Queue</div>
<svg class="abs" style="left:210px;top:268px" width="30" height="24" viewBox="0 0 30 24"><path d="M5 8.5L14 16.5L23 8.5" stroke="#fff" stroke-width="2.2" fill="none" stroke-linecap="round"/></svg>

</div>
<div id="dd2">
<div class="mi" style="left:14px;top:9.3px">GUI</div>
<div class="mi" style="left:14px;top:60.7px">Autoregistration</div>
<div class="mi" style="left:14px;top:112.1px">Images</div>
<div class="mi" style="left:14px;top:163.5px">Icon mapping</div>
<div class="mi" style="left:14px;top:214.9px">Regular expressions</div>
<div class="mi" style="left:14px;top:266.3px">Trigger displaying options</div>
<div class="mi" style="left:14px;top:317.7px">Geographical maps</div>
<div class="mi" style="left:14px;top:369.1px">Modules</div>
<div class="mi" style="left:14px;top:420.5px">Connectors</div>
<div class="mi" style="left:14px;top:471.9px">Other</div>

</div>
<svg class="abs" style="left:1474px;top:97px;z-index:40" width="26" height="32" viewBox="0 0 26 32"><path d="M4.6 4.4V23.7L9 19.7L12.05 26.7L15.5 25.2L12.5 18.5H19Z" fill="#000" stroke="#fff" stroke-width="1.4" stroke-linejoin="miter"/></svg>

<div id="sb"></div><div id="sbt"></div>
<div id="edgeL"></div><div id="edgeT"></div>
</div>
</body>
</html>
